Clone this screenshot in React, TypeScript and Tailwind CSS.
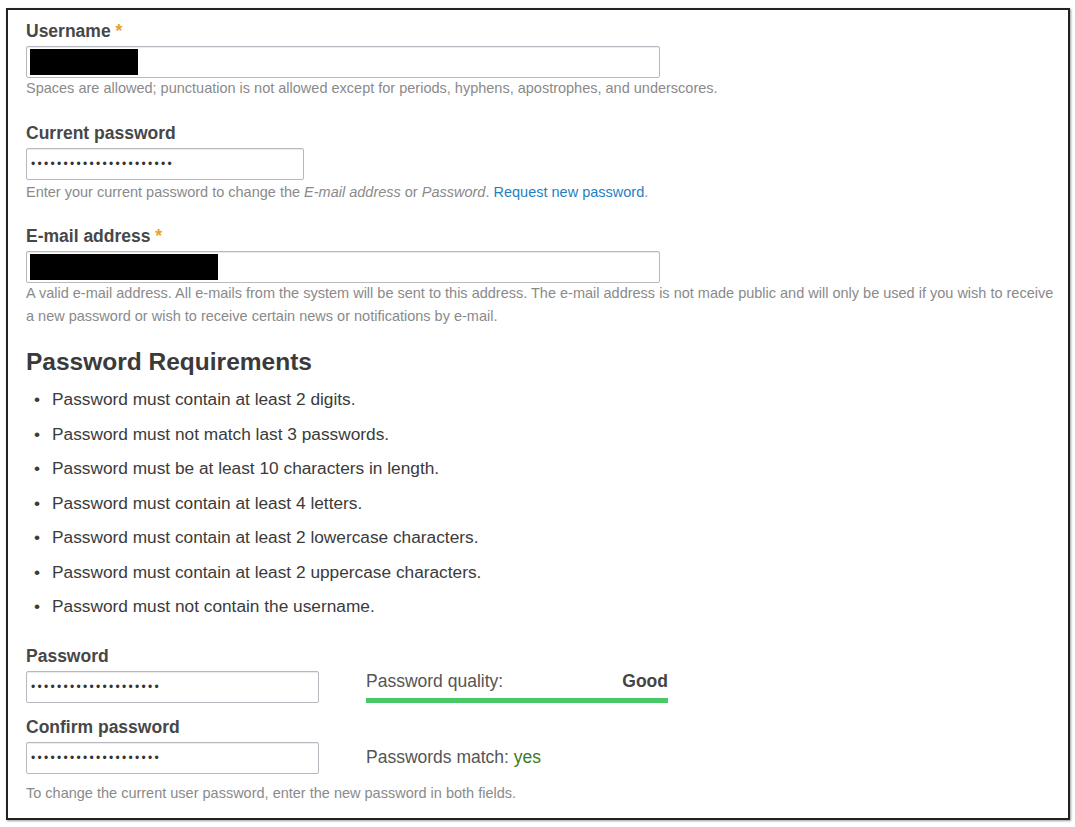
import React from 'react';

const dots = (n: number) => '•'.repeat(n);

function Label({ children, req }: { children: React.ReactNode; req?: boolean }) {
  return (
    <div className="text-[17.5px] font-bold text-[#474747] leading-[20px]">
      {children}
      {req && <span className="text-[#e7a32c]"> *</span>}
    </div>
  );
}

function Field({ w, children }: { w: string; children?: React.ReactNode }) {
  return (
    <div className={`${w} h-[32px] border border-[#b8b8c0] rounded-[2px] bg-white flex items-center px-[3px] shadow-[inset_0_1px_1px_rgba(0,0,0,0.08)]`}>
      {children}
    </div>
  );
}

function Hint({ children }: { children: React.ReactNode }) {
  return <div className="text-[14.5px] text-[#8a8a8a] leading-[23px]">{children}</div>;
}

function Dots({ n }: { n: number }) {
  return <span className="text-[12px] text-[#333] tracking-[2.3px] pl-[1px] leading-none">{dots(n)}</span>;
}

const reqs = [
  'Password must contain at least 2 digits.',
  'Password must not match last 3 passwords.',
  'Password must be at least 10 characters in length.',
  'Password must contain at least 4 letters.',
  'Password must contain at least 2 lowercase characters.',
  'Password must contain at least 2 uppercase characters.',
  'Password must not contain the username.',
];

export default function App() {
  return (
    <div className="w-[1075px] h-[827px] bg-white pt-[8px] pl-[6px]" style={{ fontFamily: '"Liberation Sans", Arial, sans-serif' }}>
      <div className="w-[1064px] h-[812px] border-2 border-[#222] shadow-[1px_1px_2px_rgba(0,0,0,0.4)] pl-[18px] pt-[11px]">
        <Label req>Username</Label>
        <div className="mt-[5px]">
          <Field w="w-[634px]">
            <div className="w-[108px] h-[26px] bg-black" />
          </Field>
        </div>
        <div className="mt-[-1px]">
          <Hint>Spaces are allowed; punctuation is not allowed except for periods, hyphens, apostrophes, and underscores.</Hint>
        </div>

        <div className="mt-[23px]">
          <Label>Current password</Label>
        </div>
        <div className="mt-[5px]">
          <Field w="w-[278px]">
            <Dots n={22} />
          </Field>
        </div>
        <div className="mt-[1px]">
          <Hint>
            Enter your current password to change the <em>E-mail address</em> or <em>Password</em>.{' '}
            <span className="text-[#1f7fc4]">Request new password</span>.
          </Hint>
        </div>

        <div className="mt-[22px]">
          <Label req>E-mail address</Label>
        </div>
        <div className="mt-[5px]">
          <Field w="w-[634px]">
            <div className="w-[188px] h-[26px] bg-black" />
          </Field>
        </div>
        <div className="mt-[-1px] w-[1030px]">
          <Hint>
            A valid e-mail address. All e-mails from the system will be sent to this address. The e-mail address is not made public and will only be used if you wish to receive a new password or wish to receive certain news or notifications by e-mail.
          </Hint>
        </div>

        <div className="mt-[19px] text-[24.5px] font-bold text-[#3a3a3a] leading-[30px]">Password Requirements</div>
        <ul className="mt-[12px] text-[17.3px] text-[#3b3b3b]">
          {reqs.map((r) => (
            <li key={r} className="h-[34.5px] leading-[20px] flex pl-[8px]">
              <span className="w-[18px]">•</span>
              {r}
            </li>
          ))}
        </ul>

        <div className="mt-[15px]">
          <Label>Password</Label>
        </div>
        <div className="mt-[5px] flex items-start">
          <Field w="w-[293px]">
            <Dots n={20} />
          </Field>
          <div className="ml-[47px] w-[302px]">
            <div className="flex justify-between text-[17.5px] leading-[20px] text-[#555]">
              <span>Password quality:</span>
              <span className="font-bold text-[#444]">Good</span>
            </div>
            <div className="mt-[7px] h-[5px] bg-[#47c965]" />
          </div>
        </div>

        <div className="mt-[14px]">
          <Label>Confirm password</Label>
        </div>
        <div className="mt-[5px] flex items-center">
          <Field w="w-[293px]">
            <Dots n={20} />
          </Field>
          <div className="ml-[47px] text-[17.5px] text-[#555]">
            Passwords match: <span className="text-[#3d7a1e]">yes</span>
          </div>
        </div>
        <div className="mt-[8px]">
          <Hint>To change the current user password, enter the new password in both fields.</Hint>
        </div>
      </div>
    </div>
  );
}
